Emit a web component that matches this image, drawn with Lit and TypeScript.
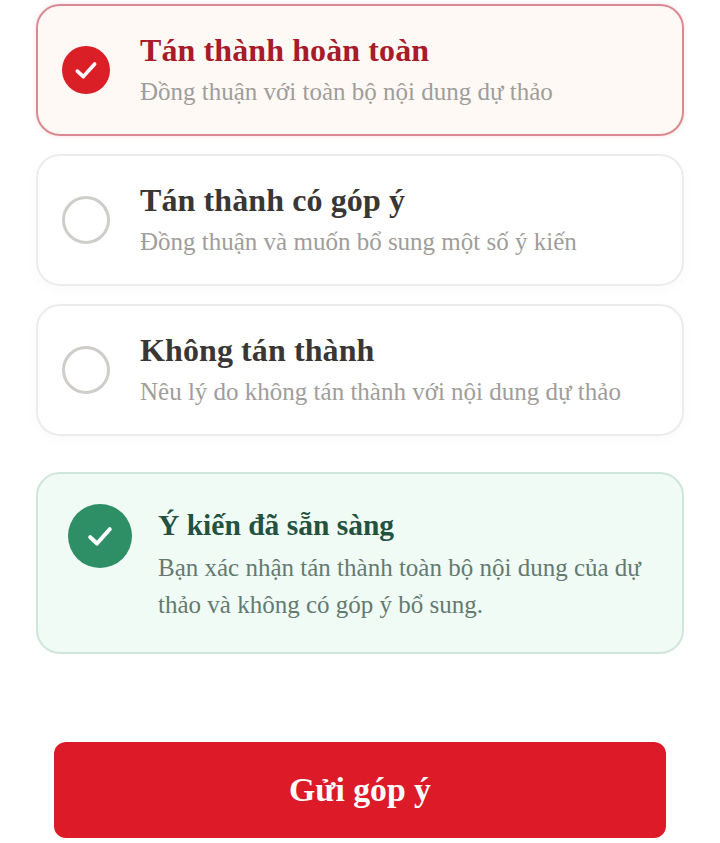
import { LitElement, html, css } from "lit";
import { customElement } from "lit/decorators.js";

const check = html`<svg viewBox="0 0 24 24" fill="none" stroke="#fff" stroke-width="2.7" stroke-linecap="round" stroke-linejoin="round"><path d="M5.5 12.8 10 17 18.5 7.5"/></svg>`;

@customElement("app-root")
export class AppRoot extends LitElement {
  static styles = css`
    :host { display: block; width: 720px; height: 843px; background: #fff; box-sizing: border-box; overflow: hidden;
      font-family: "Liberation Serif", "DejaVu Serif", serif; }
    .page { display: flex; flex-direction: column; padding: 4px 36px 0; }
    .options { display: flex; flex-direction: column; gap: 18px; }
    .card { box-sizing: border-box; height: 132px; border: 2px solid #ececea; border-radius: 24px; background: #fff;
      display: flex; align-items: center; padding: 0 24px; gap: 30px; box-shadow: 0 4px 14px rgba(0,0,0,.025); }
    .card.on { border-color: #d98a92; background: #fff9f6; box-shadow: 0 0 5px rgba(220,40,60,.15); }
    .radio { box-sizing: border-box; width: 48px; height: 48px; border-radius: 50%; border: 3px solid #cfcdca; flex: none; }
    .radio.on { border: none; background: #da1f27; display: flex; align-items: center; justify-content: center; }
    .radio.on svg { width: 32px; height: 32px; }
    .text { padding-bottom: 1px; }
    .title { font-size: 32px; line-height: 38px; font-weight: 700; color: #3a3634; letter-spacing: .1px; }
    .on .title { color: #a81b2a; }
    .sub { font-size: 25px; line-height: 32px; color: #a09d9a; margin-top: 7px; }
    .ready { box-sizing: border-box; height: 182px; margin-top: 36px; border: 2px solid #cfe6dc; border-radius: 24px;
      background: #f0fbf6; display: flex; align-items: flex-start; gap: 26px; padding: 33px 30px 0; }
    .dot { width: 64px; height: 64px; margin-top: -3px; border-radius: 50%; background: #2e8f66; flex: none; display: flex; align-items: center; justify-content: center; }
    .dot svg { width: 36px; height: 36px; }
    .rt { font-size: 29.5px; line-height: 36px; font-weight: 700; color: #23523f; }
    .rs { font-size: 25px; line-height: 37px; color: #647a70; margin-top: 6px; }
    .submit { box-sizing: border-box; display: block; margin: 88px 18px 0; width: 612px; height: 96px; border: none; border-radius: 12px;
      background: #dc1a28; color: #fff; font: 700 33.7px "Liberation Serif", serif; }
  `;
  render() {
    const opts = [
      ["Tán thành hoàn toàn", "Đồng thuận với toàn bộ nội dung dự thảo", true],
      ["Tán thành có góp ý", "Đồng thuận và muốn bổ sung một số ý kiến", false],
      ["Không tán thành", "Nêu lý do không tán thành với nội dung dự thảo", false],
    ] as const;
    return html`<div class="page">
      <div class="options">
        ${opts.map(([t, s, on]) => html`<div class="card ${on ? "on" : ""}">
          <div class="radio ${on ? "on" : ""}">${on ? check : ""}</div>
          <div class="text"><div class="title">${t}</div><div class="sub">${s}</div></div>
        </div>`)}
      </div>
      <div class="ready">
        <div class="dot">${check}</div>
        <div><div class="rt">Ý kiến đã sẵn sàng</div>
        <div class="rs">Bạn xác nhận tán thành toàn bộ nội dung của dự thảo và không có góp ý bổ sung.</div></div>
      </div>
      <button class="submit">Gửi góp ý</button>
    </div>`;
  }
}
